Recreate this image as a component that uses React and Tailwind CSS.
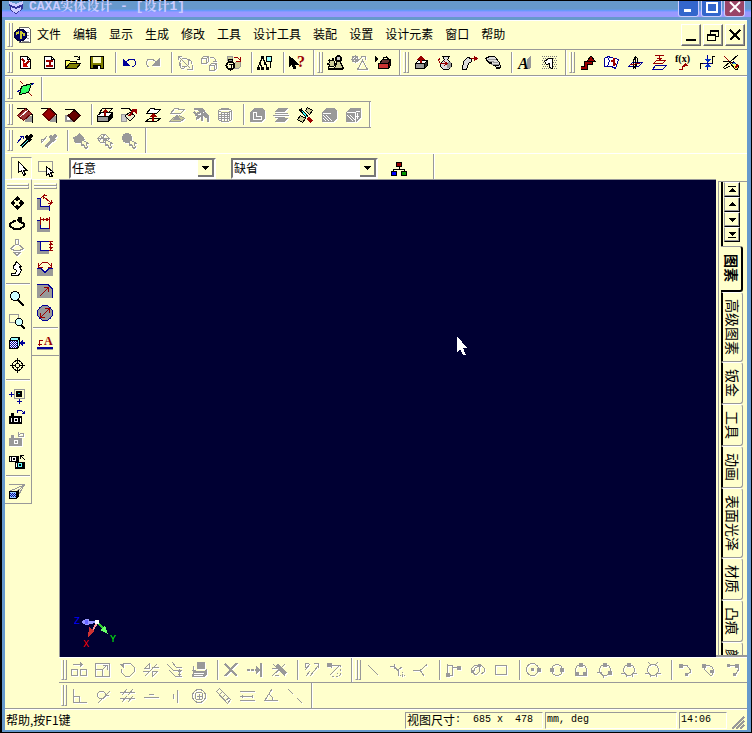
import { useState } from 'react';

const R = '#990000';
const B = '#000099';
const G = '#999999';
const W = '#ffffff';
const K = '#000000';
const N = 'none';
const box = (x, y, w, h) => `M${x} ${y}h${w}v${h}h${-w}z`;
const circle = (x, y, r) => `M${x - r} ${y}a${r} ${r} 0 1 0 ${2 * r} 0a${r} ${r} 0 1 0 ${-2 * r} 0z`;

// each shape: [path, stroke, fill, stroke width, dashes]; objects are labels
const ICONS = {
  // standard
  newScene: [['M4.5 2.5h7l3 3v9h-10z', K, W], ['M11.5 2.5v3h3'], ['M6 5l3 3M9 11l4-4', R, N, 2], ['M7 8v5h5z', N, '#cc0000']],
  newDrawing: [['M4.5 2.5h7l3 3v9h-10z', K, W], ['M11.5 2.5v3h3'], ['M6 7h7M6 12h7M9.5 7v5', R, N, 2]],
  open: [['M1.5 14.5v-8h4l1 1h6v2', K, '#ffff66'], ['M1.5 14.5l4-5h11l-4 5z', K, '#808000'], ['M9.5 3.5l1-1h3l2 2M15.5 2v3M13 5.5h3']],
  save: [[box(2.5, 2.5, 13, 12), K, '#808000'], [box(5, 3, 8, 6), N, '#ffffcc'], [box(5, 11, 8, 4), N, K], [box(10, 12, 2, 3), N, W]],
  undo: [['M3 5v6h6z', B, B], ['M6 8l3-2.5h5l1.5 2v3l-3 2.5', B]],
  redo: [['M15 5v6h-6z', G, G], ['M12 8l-3-2.5h-5l-1.5 2v3l2 2.5', G]],
  regen: [[circle(8.5, 8.5, 4.5), G], ['M2 2.5h4M2.5 2v4M3 3l11 11M16 11v4.5h-5M12 5l3 2v3M3 9l2 5h3', G]],
  boxes: [['M1.5 4.5l2-2h5v5l-2 2h-5zM1.5 4.5h5v5M6.5 4.5l2-2', G], ['M9.5 11.5l2-2h5v5l-2 2h-5zM9.5 11.5h5v5M14.5 11.5l2-2', G], ['M10 3h3l2 2v2M12.5 7.5h4', G]],
  lockBoxes: [['M3.5 2.5h5v4h-5zM10.5 9.5l2-2h4v5l-2 2h-4z', G, '#cccc99'], ['M10 3h3l3 3M16 3v4h-4', R], [circle(6.5, 11.5, 4), K, '#ffffcc', 2], ['M4.5 7V5h4v2', K], ['M5 10.5h4M7 10v4', K]],
  findTree: [['M6.5 4l-3 5l-1 5M6.5 4l3 5l2 5M4 9l2 5'], [box(5, 2, 3, 3), N, K], [box(3, 8, 2, 3), N, K], [box(8, 8, 2, 3), N, K], [box(1, 13, 3, 3), N, K], [box(5, 13, 3, 3), N, K], [box(10, 13, 3, 3), N, K], [circle(13, 5, 3), K, '#99ffff'], ['M14.5 8v6', K]],
  helpPointer: [['M1 2v11l3-3l2 5l2-1l-2-4h4z', K, K], { t: '?', x: 9, y: 13, c: R, s: 16 }],
  // palettes
  gearSet: [[circle(6, 9.5, 3), K, '#cccc99'], ['M1 9.5h2M9 9.5h3M6.5 4v2M3 6l1 1M2 13l2-1', K, N, 2], ['M8.5 14.5l3-8h2l4 8z', K, '#cccc99'], [circle(12.5, 4.5, 2.5), K, '#cccccc', 2], ['M2 15h15', K, N, 2]],
  gearSetOff: [[circle(5, 5, 2.5), G], ['M1 5.5h8M5.5 1v8M2 2l6 6M8 2l-6 6M7.5 15.5l5-9l5 9zM12 3l-4 4M11 2.5h4v3', G]],
  toolbox: [['M5.5 9.5l3-4h8l-2 4z', K, '#663333'], [box(4.5, 9.5, 10, 5), K, '#cc3333'], ['M14.5 9.5l2-4v6l-2 3z', K, '#660000'], ['M9.5 6V4l3-1l2 2', K], ['M1 2v6l4-3z', N, K]],
  extrude: [['M3.5 9.5l3-3h9l-3 3z', K, W], [box(3.5, 9.5, 9, 5), K, G], ['M12.5 9.5l3-3v5l-3 3z', K, '#333333'], ['M9 2v7', R, N, 2], ['M5 6l4-5l4 5z', N, R]],
  spin: [['M6.5 2.5h7l-2 3l4 4v3l-3 3h-5l-3-3v-3l4-4z', K, '#dddddd'], ['M12 8h2v5h-3', G, G], ['M3.5 4.5l-1 2l2 3h6M8 7l3 2.5l-3 2.5', R]],
  sweep: [['M2.5 15.5l1-8l4-4l4 1v3l-3 2l-2 6z', K, '#dddddd'], ['M11 4.5h5M14 2v5l3-2.5z', R, R]],
  loft: [['M1.5 4.5l4-2h5l5 6l1 5h-4l-2-3l-5-1z', K, '#dddddd'], ['M4 5l8 1M5 7l9 2M7 10l8 1', G], ['M4 8h4M9 11h6M12 14h4', K]],
  text3d: [['M11 5l4-3v11l-2 2h-2z', N, G], { t: 'A', x: 2, y: 15, c: K, s: 16, i: true }],
  sign: [['M1.5 2.5h15M2.5 4.5h14M1.5 6.5h15M2.5 8.5h14M1.5 10.5h15M2.5 12.5h14M1.5 14.5h15', '#777777', N, 1, '1 1'], ['M4.5 7.5l4-3h4v10l-3-1v-4l-3 1z', K, W]],
  // curves
  curve3d: [['M3 14h5v-5h5V5', K, N, 4], ['M3 14h5v-5h5V6', R, N, 2], ['M9 7l4-5l4 5z', K, R]],
  wrapCurve: [['M2.5 4.5l3-2l4 1l7 2l-3 9l-4-2h-7z', B, W], ['M5.5 3l2 4l-2 5', B], ['M11.5 4v8M9 6.5h2M12 9.5h2', R, N, 2]],
  crossCurve: [['M2.5 12.5l4-4h10l-4 4z', B], ['M9.5 2.5v12M9.5 2.5l-2 4v8l4-5v-5z', K], ['M4 11l10-2', R]],
  projCurve: [['M3.5 9.5l3-3h9l-3 3z', R], ['M2.5 15.5l3-4h11l-4 4z', B], ['M9.5 1v6M5 1.5h9M7 4.5h5M8.5 5.5h2', R]],
  fxCurve: [{ t: 'f(x)', x: 1, y: 8, c: K, s: 10 }, ['M5 15.5h3v-3h3', R], ['M8 12l3-3l3 3z', N, R]],
  bridge: [['M2.5 15v-6h3M12 9.5h2.500v-7h2', K], ['M9.5 1v15M5 9.5h9', B], ['M6 5h7l-3 3zM6 13h7l-3-3z', N, '#0033cc']],
  editCurve: [['M2 2l8 8', R], ['M16 1l-15 13M1 7.5h8M2 15l6-3', K], ['M8.5 9.5l3-2l5 5l-1 3h-2z', K, '#ffff66'], ['M13 14l3-3', R, N, 2], ['M10 10l2-2l2 2', B, '#33cccc']],
  // reference plane
  plane: [['M3.5 14.5l2-8l10-3l-3 9z', K, '#33ff66'], ['M4 1l3 3M13 13l3 3', R], ['M1 12l3-2M15 5l3-2', B]],
  // surface and face edit
  blend: [['M1 2.5h9l6 6v8', K], [box(9, 10, 7, 6), N, G], ['M1.5 9.5l8-7l6 5l-8 7z', '#660000', '#993333'], ['M4 11l8-7', W]],
  chamfer: [['M1 2.5h9l6 6v8', K], [box(10, 10, 6, 6), N, G], ['M9 2.5l6 6l-6 6l-6-6z', '#660000', R]],
  moveFace: [['M1 3.5h9l6 6', K], [box(1.5, 9.5, 7, 6), G, G], [box(3, 11, 3, 3), N, W], ['M10 4.5l6 5l-6 6l-6-6z', '#330000', '#660000']],
  pullFace: [['M1.5 9.5l4-3h11l-4 4h-11z', K, W], ['M1.5 10.5h11v5h-11z', K, G], ['M12.5 10.5l4-4v5l-4 4z', K, K], ['M3.5 6.5l3-4h10l-4 4z', K, '#ffffcc'], ['M9 4v6', R, N, 2], ['M6 6l3-3l3 3z', N, R]],
  draft: [['M1 2.5h8l4 4', K], [box(1.5, 8.5, 5, 7), G, '#cccccc'], ['M5 10l5-4l5 4l-5 5z', K, '#eeeecc'], ['M9 10l5-6', R, N, 2], ['M11 3h6v6z', N, R]],
  matchFace: [['M2.5 7.5l4-5h3l2 1h5l-4 4h-3z', K, W], ['M1.5 15.5l4-3h11l-4 3z', K], ['M9 15V9', R, N, 2], ['M5 11l4-4l4 4z', N, R]],
  offFace: [['M2.5 7.5l4-5h3l2 1h5l-4 4h-3z', G], ['M1.5 15.5l4-4h4l2-2l5 3l-4 3z', G, '#cccc99'], ['M9 9l-3 4h6z', G, G]],
  offKnit: [['M2 3h8l6 7v6', G, N, 2], ['M3 9l9-5M4 13l9-6M2 6l6 6M7 4l8 8M10 10v5', G, N, 2]],
  offShell: [['M2.5 4.5l3-2h7l3 2v9l-3 2h-7l-3-2zM2.5 4.5l3 2h7l3-2M4 3.5h10', G], ['M5.5 7v8M8.5 7v8M11.5 7v8M13.5 6v8', G], ['M3 8.5h12M3 10.5h12M3 12.5h12', G, N, 1, '2 1']],
  offHollow: [['M2 6l4-4h8l3 3v7l-4 4h-11z', N, G], ['M5.5 6.5h3v4h5v3h-8z', W]],
  offSection: [['M6 2h10l-3 4h-10zM6 12h10l-3 4h-10z', N, G], ['M1 9.5h16M3 7.5h13M3 11.5h10', G]],
  trimBody: [['M1.5 13.5l3-4l5 3l-3 4zM9.5 4.5l2-3l5 3l-3 4z', K, '#cccc99'], ['M4 3l7 8', K, N, 3], ['M6 5l5 6', '#33ffff'], ['M12 12l4 4', R, N, 3]],
  offBodyA: [['M2 6l4-4h8l3 3v7l-4 4h-11z', N, G], ['M3 7.5h8M3 9l6 6M3 12l3 3M6 9l6 6', W]],
  offBodyB: [['M2 6l4-4h11v9l-4 5h-11z', N, G], ['M3 6.5h8v9M3 9l6 6M6 9l5 5M12 5.5h4M12 10.5h3M13.5 7v6', W]],
  // render pickers
  dropper: [['M5 15l7-7', K, N, 3], ['M5 15l7-7', '#66ffff'], ['M10 4l5 5M12 7l4-4', K, N, 3], ['M1 11l6-7M4 4h3v3', B]],
  dropperOff: [['M6 15l6-7', G, N, 3], ['M10 4l5 5M12 7l4-4', G, N, 3], ['M1 7l4 0M1 7v4M2 10l5-6', G]],
  pickA: [['M1 5l4-1l2-3l4 3l2 4l-4 3h-6z', N, G], ['M9.5 7.5v6l2-1l2 4l2-1l-1-4h2z', G, '#ffffcc']],
  pickB: [['M1.5 6.5l4-4h4l4 4l-4 4h-5zM4 3l6 7M10 2l-7 7M7.5 2v8M2 6.5h11', G], ['M9.5 7.5v6l2-1l2 4l2-1l-1-4h2z', G, '#ffffcc']],
  pickC: [[circle(7, 6, 5), N, G], ['M9.5 7.5v6l2-1l2 4l2-1l-1-4h2z', G, '#ffffcc']],
  pointer: [['M5.5 2.5v11l3-2l2 5l2-1l-2-4h3.5z', K, W]],
  boxPointer: [[box(1.5, 2.5, 14, 10), G], ['M9.5 7.5v9l2-2l2 4l2-1l-2-4h3z', K, W]],
  tree: [['M9 6v4M3.5 12v-3h11v3', K], [box(6.5, 2.5, 5, 4), K, '#990000'], [box(1.5, 11.5, 5, 4), K, '#0000ff'], [box(11.5, 11.5, 5, 4), K, '#009900']],
  // view
  pan: [['M9 2l4 4h-8zM9 16l4-4h-8zM2 9l4-4v8zM16 9l-4-4v8z', N, K], ['M9 4v3M9 11v3M4 9h3M11 9h3', K, N, 2]],
  orbit: [['M12 5l4 3v2l-4 3h-6l-4-3v-2l4-3h2', K, N, 2], ['M10 1h4v7l-5-3z', N, K]],
  walkOff: [['M7.5 1.5h3v5h-3zM7.5 6.5l-5 4l4 2h5l4-2l-5-4M6 14.5h6l-3 3z', G]],
  walk: [['M8.5 1.5l5 5h-2l2 4l-3 5h-7v-2h4l1-3l-3-2v-3h1z', K, W]],
  zoom: [[circle(7, 6, 4.5), K, '#ccffff'], ['M10 10l6 6', K, N, 2]],
  zoomBox: [[box(1.5, 2.5, 9, 8), G], [circle(11, 10, 3.5), K, '#ccffff'], ['M13 13l4 4', K, N, 2]],
  lookAt: [['M1.5 6.5l2-3h8l-2 3zM9.5 6.5l2-3v8l-2 3', K, '#99ffff'], [box(1.5, 6.5, 8, 8), K, W], ['M2 7.5h7M3 8.5h7M2 9.5h7M3 10.5h7M2 11.5h7M3 12.5h7M2 13.5h7', B, N, 1, '1 1'], ['M13 9h4', B, N, 2], ['M15 6v6l-4-3z', N, B]],
  target: [[circle(9.5, 9.5, 5), K], [circle(9.5, 9.5, 2), K], ['M9.5 2v5M9.5 12v5M2 9.5h5M12 9.5h5']],
  viewBox: [[box(6.5, 3.5, 10, 9), G], [box(8, 5, 6, 6), N, K], ['M10 7h2', '#33cccc'], ['M1 8.5h5M3.5 6v5M11.5 13v5M9 15.5h5', B]],
  camera: [['M1 8h13v8h-13zM3 5h3v4h-3z', N, K], [circle(8, 12, 2), W], [box(3, 10, 1, 4), N, W], [box(12, 10, 1, 4), N, W], ['M9.5 5V2.5h4l2 2', B], ['M13 6h4V2z', N, B]],
  cameraOff: [['M1 8h13v8h-13zM3 5h3v4h-3z', N, G], [circle(8, 12, 2), W], ['M10.5 2v4h4M15.5 7v-4h-3l-2 3', G]],
  cameras: [['M1 4h10v6h-10z', N, K], [circle(6, 7, 2), W], [box(2, 5, 1, 4), N, W], ['M7 10h10v7h-10z', N, K], [circle(12, 13, 2), '#66ffff'], [box(8, 11, 1, 4), N, W], ['M12 3.5h4M12.5 3v4M13 4l4 4', K]],
  persp: [['M1 2.5h16M16 3l-7 13M16 3l-14 6M17 3l-9 7', G], [box(1, 9, 8, 8), N, K], [box(2, 10, 6, 6), N, '#99ccff'], ['M2 11.5h6M3 12.5h5M2 13.5h6M3 14.5h5', B, N, 1, '1 1'], ['M9 9l2-1v6l-2 3z', N, K]],
  // smart dimensions
  dimAlign: [['M1 5h4v8h9v3h-13z', N, G], ['M1 4.5h3.5v8h9v4', B], ['M7 2l8 7M5 4l4-4M13 12l4-4M7 5V1.5h4M15 6v3.5h-3', R]],
  dimHoriz: [['M1 5h4v7h9v4h-13z', N, G], ['M1 4.5h3.5v8h8.5v-10', B], ['M4.5 1v8M13.5 1v12M5 3.5h8', R], ['M5 3.5l3-2v4zM13 3.5l-3-2v4z', N, R]],
  dimVert: [['M1 4h4v8h8v4h-12z', N, G], ['M1 3.5h12M4.5 4v8h9', B], ['M13 3.5h4M13 12.5h4M14.5 4v8', R], ['M15 4l-2 3h4zM15 12l-2-3h4z', N, R]],
  dimAngle: [['M1 9h4l4 4l4-4h4v7h-16z', N, G], ['M1 8.5h4l4 4l4-4h4', B], ['M3 6l4-4h4l4 4M2.5 3v4h4M15.5 3v4h-4', R]],
  dimRadius: [['M1 3h11l4 5v8h-15z', N, G], ['M1 2.5h11l4 4v9', B], ['M4 14l8-8M8 5.5h4.5V10', R]],
  dimDiameter: [[circle(9, 9, 7.5), B, G], ['M5 13l8-8M9 4.5h4.5V9M4.5 9v4.5H9', R]],
  textNote: [['M1 14h16', B, N, 2], ['M1 15.5h16', G], ['M3 6.5h4M3.5 6v6M2 10.5h4', R], { t: 'A', x: 8, y: 11, c: R, s: 12 }],
  // sketch
  mirrorCopy: [['M3 3.5h8', G], ['M10 1v5l3-2.5z', N, G], [box(1.5, 8.5, 6, 6), G], [box(10.5, 8.5, 6, 6), G]],
  scale: [[box(1.5, 2.5, 14, 13), G], [box(1.5, 8.5, 7, 7), G], ['M8 9l5-5M9 4.5h4.5V9', G]],
  rotate: [['M4 4l3-2h5l4 4v5l-4 4h-5l-4-4v-3', G], ['M1 3h5v5z', N, G]],
  mirror: [['M3 15L15 3M2.5 7.5h5v-5zM10.5 10.5v5l5-5zM1 10.5h7M10 6.5h7', G]],
  offset: [['M1 3l6 6h9M6 1l4 5h6M3 9l6 6h7M13.5 8v7M12 10.5h3M12 13.5h3', G]],
  project: [['M7 1h8v7h-8zM3 10h11l3-2v5l-3 3h-12z', N, G], ['M3.5 5v6M2 9.5h4', G], ['M4 12.5h10M4 14.5h9', W]],
  trim: [['M3 3l12 12M15 2l-12 13', G, N, 2]],
  extend: [['M1 9h11', G, N, 2, '3 1'], ['M10 5v8l4-4z', N, G], ['M15 2v14', G, N, 2]],
  breakAt: [['M2 15L15 3M3 3l12 12', G], ['M7 4l9 9', G, N, 3], ['M2 7.5h5M5 14.5h4', G]],
  lineDims: [['M3 9l5-6M8 15l8-10M4 15l4-5M3 6.5v-4h4M12 2.5h4v4', G]],
  cornerDims: [[box(1, 2, 5, 4), N, G], ['M5 4.5h10M4 14l10-10', G], ['M14.5 4v11M6 15.5h8M5 6l9 9', G, N, 1, '2 2']],
  line: [['M4 4l10 10', G]],
  tanLine: [['M2 5.5h4l4 4l1 5M6.5 3v5M10 9l4-3', G], ['M12 14.5h5M14.5 11v5', G, N, 1, '1 1']],
  perpLine: [['M1 9.5h7l7-6M8 9l4 6', G]],
  polyline: [['M3.5 3v10M4 4.5h4M8.5 4v10h-5M8.5 6.5h7', G], [box(2, 12, 4, 4), N, G], [box(13, 5, 4, 4), N, G]],
  spline: [['M4 12l-1-4l4-4l4 1v6l-3 3l-3-2l2-5l6-3l3 3v4l-3 2', G], [box(3, 9, 3, 3), N, G], [box(10, 3, 3, 3), N, G]],
  rect: [[box(3.5, 4.5, 11, 9), G]],
  circC: [[circle(8.5, 8.5, 6), G], [box(7, 7, 3, 3), N, G], [box(13, 7, 4, 4), N, G]],
  circ2: [[circle(9, 9, 5.5), G], [box(2, 7, 4, 4), N, G], [box(12, 7, 4, 4), N, G]],
  circ3: [[circle(9, 9, 5.5), G], [box(7, 2, 4, 4), N, G], [box(3, 11, 4, 4), N, G], [box(11, 11, 4, 4), N, G]],
  circT1: [[circle(9, 9, 5.5), G], [box(7, 2, 4, 4), N, G], [box(12, 10, 4, 4), N, G], ['M1 11.5h4l3 5', G]],
  circT2: [[circle(9, 9, 5.5), G], [box(7, 2, 4, 4), N, G], ['M1 12.5h5M12 12.5h5M6.5 13v3M12.5 13v3', G]],
  circT3: [[circle(9, 9, 5.5), G], ['M4 1l2 2h6l2-2M1 12.5h5M12 12.5h5M6.5 13v3M12.5 13v3', G]],
  arcA: [['M5 4.5h6l3 4v3l-4 3', G], [box(3, 3, 4, 4), N, G], [box(9, 12, 3, 3), N, G]],
  arcB: [['M4 4v4l6 6h2l2-4l-2-4l-4-2z', G], [box(2, 3, 4, 4), N, G], [box(10, 9, 4, 3), N, G]],
  arcC: [['M4 4.5h10v5l-3 5', G], [box(3, 3, 3, 3), N, G], [box(11, 3, 4, 4), N, G], [box(9, 12, 3, 3), N, G]],
  // constraints
  perp: [['M3.5 2v13h13M3.5 9.5h6v5', G]],
  tangent: [[circle(7.5, 8, 4), G], ['M4 16L16 4M11 8.5h4', G]],
  parallel: [['M2 5.5h15M2 11.5h15M4 8l5-6M10 8l5-6M4 15l5-6M10 15l5-6', G]],
  horiz: [['M2 10.5h15M7 7.5h5', G]],
  vert: [['M11.5 3v13M7.5 7v5', G]],
  concentric: [[circle(9, 9, 6.5), G], [circle(9, 9, 4), G], ['M7 9.5h5M9.5 7v5', G]],
  equal: [['M2.5 4.5l3-3l11 11l-3 4zM5 8l3-3M8 11l4-4M11 14l4-3', G]],
  equalLen: [['M2 4.5h15M2 9.5h13M2 13.5h15M4.5 8v3M14.5 8v3', G]],
  angle: [['M2 13.5h14M3 13l7-11M7 7l3 3v4', G]],
  collinear: [['M2 2l5 5M11 11l5 5', G]],
};

const STANDARD = ['newScene 新建', 'newDrawing 新建图纸', 'open 打开', 'save 保存', '|', 'undo 撤消', '-redo 重做', '|', '-regen 更新', '-boxes 移动', 'lockBoxes 锁定', '|', 'findTree 查找', '|', 'helpPointer 帮助', '||', 'gearSet 设计库', '-gearSetOff 零件库', 'toolbox 工具箱', '||', 'extrude 拉伸', 'spin 旋转', 'sweep 扫描', 'loft 放样', '|', 'text3d 文字', 'sign 标志', '||', 'curve3d 三维曲线', 'wrapCurve 包裹曲线', 'crossCurve 交线', 'projCurve 投影线', 'fxCurve 公式曲线', 'bridge 桥接曲线', 'editCurve 编辑曲线'];
const FACES = ['blend 圆角', 'chamfer 倒角', 'moveFace 移动面', '|', 'pullFace 拉伸面', 'draft 拔模', 'matchFace 匹配面', '-offFace 等距面', '-offKnit 缝合', '-offShell 抽壳', '|', '-offHollow 挖空', '-offSection 截面', 'trimBody 裁剪', '-offBodyA 布尔', '-offBodyB 分割'];
const RENDER = ['dropper 提取', '-dropperOff 应用', '|', '-pickA 表面', '-pickB 线框', '-pickC 零件'];
const VIEW = ['pan 平移', 'orbit 旋转视图', '-walkOff 前后', 'walk 漫游', '|', 'zoom 缩放', 'zoomBox 窗口缩放', 'lookAt 指定面', 'target 目标', '|', 'viewBox 全屏', 'camera 保存视向', '-cameraOff 恢复视向', 'cameras 视向', '|', 'persp 透视'];
const DIMS = ['dimAlign 对齐尺寸', 'dimHoriz 水平尺寸', 'dimVert 垂直尺寸', 'dimAngle 角度尺寸', 'dimRadius 半径', 'dimDiameter 直径', '|', 'textNote 文字注释'];
const SKETCH = ['-mirrorCopy 平移', '-scale 缩放', '-rotate 旋转', '-mirror 镜像', '-offset 等距', '-project 投影', '|', '-trim 裁剪', '-extend 延伸', '-breakAt 打断', '|', '-lineDims 曲线尺寸', '-cornerDims 端点', '||', '-line 两点线', '-tanLine 切线', '-perpLine 法线', '|', '-polyline 连续线', '-spline 样条', '-rect 长方形', '|', '-circC 圆心圆', '-circ2 两点圆', '-circ3 三点圆', '-circT1 一切点圆', '-circT2 两切点圆', '-circT3 三切点圆', '|', '-arcA 圆弧', '-arcB 圆心弧', '-arcC 三点弧'];
const CONSTRAINTS = ['-perp 垂直', '-tangent 相切', '-parallel 平行', '-horiz 水平', '-vert 竖直', '-concentric 同心', '-equal 等长', '-equalLen 等距', '-angle 角度', '-collinear 共线'];
const MENUS = ['文件', '编辑', '显示', '生成', '修改', '工具', '设计工具', '装配', '设置', '设计元素', '窗口', '帮助'];
const TABS = ['图素', '高级图素', '钣金', '工具', '动画', '表面光泽', '材质', '凸痕', '颜色'];

function Icon({ name, off }) {
  return (
    <svg width="18" height="18" viewBox="0 0 18 18" shapeRendering="crispEdges" aria-hidden="true" className={off ? 'shrink-0 drop-shadow-[1px_1px_0_#fff]' : 'shrink-0'}>
      {ICONS[name].map((s, i) =>
        Array.isArray(s) ? (
          <path key={i} d={s[0]} stroke={s[1] || K} fill={s[2] || N} strokeWidth={s[3] || 1} strokeDasharray={s[4]} />
        ) : (
          <text key={i} x={s.x} y={s.y} fill={s.c} fontSize={s.s} fontWeight="bold" fontStyle={s.i ? 'italic' : 'normal'} fontFamily="Liberation Serif, serif">{s.t}</text>
        )
      )}
    </svg>
  );
}

function Grip({ vertical }) {
  if (vertical) {
    return (
      <div className="flex h-3 w-full flex-col px-0.5 pt-[3px]">
        <span className="h-[3px] border-t border-r border-b border-t-white border-r-[#999] border-b-[#999]" />
        <span className="h-[3px] border-t border-r border-b border-t-white border-r-[#999] border-b-[#999]" />
      </div>
    );
  }
  return (
    <div className="flex h-full w-2 shrink-0 py-0.5 pl-0.5">
      <span className="w-[3px] border-r border-b border-l border-r-[#999] border-b-[#999] border-l-white" />
      <span className="w-[3px] border-r border-b border-l border-r-[#999] border-b-[#999] border-l-white" />
    </div>
  );
}

function Tools({ items, vertical }) {
  return items.map((item, i) => {
    if (item === '|') {
      return vertical ? (
        <div key={i} className="flex h-2 w-full items-center px-px">
          <span className="h-0.5 w-full border-t border-b border-t-[#999] border-b-white" />
        </div>
      ) : (
        <div key={i} className="flex h-full w-2 shrink-0 justify-end py-0.5">
          <span className="w-0.5 border-r border-l border-r-white border-l-[#999]" />
        </div>
      );
    }
    if (item === '||') {
      return (
        <div key={i} className="flex h-full w-3.5 shrink-0 pl-1">
          <span className="w-0.5 shrink-0 border-r border-l border-r-white border-l-[#999]" />
          <Grip />
        </div>
      );
    }
    const off = item[0] === '-';
    const [name, label] = item.replace('-', '').split(' ');
    return (
      <button key={i} type="button" aria-label={label} disabled={off} className={vertical ? 'flex h-[22px] w-full items-center justify-center pr-0.5' : 'flex h-full w-6 shrink-0 items-center justify-center'}>
        <Icon name={name} off={off} />
      </button>
    );
  });
}

function Combo({ label, options }) {
  return (
    <div className="relative flex h-[21px] w-[147px] shrink-0 border-2 border-t-[#777] border-r-white border-b-white border-l-[#777]">
      <select aria-label={label} className="w-full appearance-none bg-white pb-0.5 pl-px leading-none">
        {options.map((o) => <option key={o}>{o}</option>)}
      </select>
      <span className="pointer-events-none absolute inset-y-0 right-0 flex w-4 items-center justify-center border-r-2 border-b-2 border-r-[#777] border-b-[#777] bg-[#ffffcc]">
        <svg width="7" height="4" shapeRendering="crispEdges"><path d="M0 0h7L3.5 4z" /></svg>
      </span>
    </div>
  );
}

function TitleBar() {
  const btn = 'flex h-4 w-[21px] items-end justify-center rounded-b-[3px] border border-t-0 border-[#ccccff]';
  return (
    <header className="flex h-5 shrink-0 flex-col border-t border-black bg-[#6699cc]">
      <div className="flex h-4 items-start justify-between bg-linear-to-b from-[#6699cc] from-50% via-[#6699ff] via-60% to-[#9999ff] to-70% pr-1.5 pl-1.5">
        <div className="flex items-start gap-1">
          <svg width="17" height="13" viewBox="0 0 17 13" shapeRendering="crispEdges" aria-hidden="true">
            <path d="M1 1l7 4l7-4v7l-7 5l-6-4z" fill="#333399" />
            <path d="M1 0l7 3l7-3v3l-7 3l-7-3zM3 6l5 2l5-2v3l-5 3l-5-3z" fill="#ccccff" />
          </svg>
          <h1 className="font-['Liberation_Mono','Noto_Serif_CJK_SC','Noto_Sans_CJK_SC',monospace] text-[13px] leading-3 font-bold whitespace-pre text-[#ccccff]">CAXA实体设计 - [设计1]</h1>
        </div>
        <div className="flex gap-0.5">
          <button type="button" aria-label="最小化" className={`${btn} bg-[#3366cc]`}>
            <svg width="18" height="15"><path d="M4 8h7v3H4z" fill="#fff" /></svg>
          </button>
          <button type="button" aria-label="还原" className={`${btn} bg-[#3366cc]`}>
            <svg width="18" height="15"><path d="M4 2h10v9H4z" fill="none" stroke="#fff" strokeWidth="2" /></svg>
          </button>
          <button type="button" aria-label="关闭" className={`${btn} bg-[#994466]`}>
            <svg width="18" height="15"><path d="M4 1l10 10M14 1L4 11" stroke="#fff" strokeWidth="2" /></svg>
          </button>
        </div>
      </div>
    </header>
  );
}

function MenuBar() {
  const btn = 'flex h-[22px] w-5 items-center justify-center border border-t-white border-r-[#666] border-b-[#666] border-l-white shadow-[inset_-1px_-1px_0_#999]';
  return (
    <div className="flex h-[29px] shrink-0 items-center border-b border-[#999]">
      <Grip />
      <svg width="20" height="18" viewBox="0 0 20 18" shapeRendering="crispEdges" aria-hidden="true">
        <path d="M6.5 1.5h9l2 2v13h-11z" fill="#fff" stroke="#666" />
        <path d="M14 6.5h2M14 9.5h2M14 12.5h2M9 15.5h7" stroke="#999" />
        <circle cx="7.5" cy="9" r="6" fill="#000066" stroke="#003" />
        <path d="M3 8l3-2M7.5 5v8M7 6l4 2v2" stroke="#cccc33" strokeWidth="2" fill="none" />
      </svg>
      <nav className="ml-1 flex flex-1 gap-3 pb-0.5">
        {MENUS.map((m) => <button key={m} type="button" className="whitespace-nowrap">{m}</button>)}
      </nav>
      <div className="flex gap-0.5 pr-0.5">
        <button type="button" aria-label="最小化文档" className={btn}>
          <svg width="14" height="14" shapeRendering="crispEdges"><path d="M2 11h10v2H2z" /></svg>
        </button>
        <button type="button" aria-label="还原文档" className={btn}>
          <svg width="14" height="14" shapeRendering="crispEdges" fill="none" stroke="#000"><path d="M4.5 6V2.5h8v6H9M4 3.5h9M1.5 6.5h8v6h-8zM1 7.5h9" /></svg>
        </button>
        <button type="button" aria-label="关闭文档" className={btn}>
          <svg width="14" height="14" shapeRendering="crispEdges"><path d="M2 2l10 10M12 2L2 12" stroke="#000" strokeWidth="2" /></svg>
        </button>
      </div>
    </div>
  );
}

function Viewport() {
  return (
    <main className="relative min-w-0 flex-1 border-t border-l border-[#999] bg-[#000033]">
      <svg width="12" height="20" viewBox="0 0 12 20" shapeRendering="crispEdges" className="absolute top-[156px] left-[396px]">
        <path d="M1 0v16l3-3l3 6h3l-3-7h4z" fill="#fff" />
      </svg>
      <svg width="46" height="38" viewBox="0 0 46 38" className="absolute bottom-2 left-3.5" shapeRendering="crispEdges" fontFamily="Liberation Mono, monospace" fontSize="10">
        <path d="M22 11h-12" stroke="#9999ff" strokeWidth="2" />
        <path d="M7 11l5-3h3v2h4v3h-4v1h-3z" fill="#9999ff" />
        <path d="M11 9h3v4h-3z" fill="#6666ff" />
        <path d="M23 12l-6 10" stroke="#ff9999" strokeWidth="2" />
        <path d="M14 26l1-10l6 4z" fill="#cc3333" />
        <path d="M23 11l6 6" stroke="#33cc33" strokeWidth="2" />
        <path d="M34 23l-3-8l-5 4z" fill="#66ff66" />
        <path d="M21 9h4v4h-4z" fill="#fff" />
        <g strokeWidth="0">
          <text x="0" y="13" fill="#0000ff">Z</text>
          <text x="9" y="36" fill="#ff0000">X</text>
          <text x="36" y="31" fill="#00ff00">Y</text>
        </g>
      </svg>
    </main>
  );
}

function Catalog() {
  const [active, setActive] = useState('图素');
  const arrows = ['M1 1h8v1H1zM5 3l4 4H1z', 'M5 2l4 4H1z', 'M1 3h8L5 7z', 'M1 2h8L5 6zM1 7h8v1H1z'];
  return (
    <aside className="flex w-[31px] shrink-0 flex-col overflow-hidden border-b-2 border-[#999] pt-0.5 pl-0.5">
      <div className="flex min-h-0 flex-1 flex-col border-t border-l border-[#999] pl-0.5">
        <div className="flex shrink-0 flex-col border-l-2 border-black pb-1 pl-px">
          {arrows.map((d, i) => (
            <button key={i} type="button" aria-label={['首页', '上移', '下移', '末页'][i]} className="flex h-[15px] w-4 items-center justify-center border border-t-white border-r-black border-b-black border-l-[#999] shadow-[inset_-1px_-1px_0_#999]">
              <svg width="10" height="9" shapeRendering="crispEdges"><path d={d} /></svg>
            </button>
          ))}
        </div>
        {TABS.map((t) => (
          <button
            key={t}
            type="button"
            onClick={() => setActive(t)}
            className={
              t === active
                ? 'flex w-[22px] shrink-0 items-center justify-center rounded-r-[3px] border-t border-r-2 border-b-2 border-t-[#999] border-r-black border-b-black pt-[7px] pb-2 pl-px font-bold'
                : 'flex w-[22px] shrink-0 items-center justify-center rounded-r-[3px] border-t border-r border-b border-l-2 border-t-white border-r-[#999] border-b-[#999] border-l-black py-1.5'
            }
          >
            <span className="text-sm leading-4 whitespace-nowrap [text-orientation:sideways] [writing-mode:vertical-rl]">{t}</span>
          </button>
        ))}
      </div>
    </aside>
  );
}

function StatusBar() {
  const cell = "flex h-[17px] items-center border border-t-[#999] border-r-white border-b-white border-l-[#999] pl-px whitespace-pre font-['Liberation_Mono','Noto_Sans_CJK_SC',monospace] text-[10px]";
  return (
    <footer className="flex h-[21px] shrink-0 items-center gap-0.5 border-t border-white">
      <span className="flex-1 pl-px">帮助,按F1键</span>
      <span className={`${cell} w-[138px]`}><span className="font-['Noto_Sans_CJK_SC',sans-serif] text-xs">视图尺寸</span>:  685 x  478</span>
      <span className={`${cell} w-[132px]`}>mm, deg</span>
      <span className={`${cell} w-12`}>14:06</span>
      <svg width="16" height="16" shapeRendering="crispEdges" aria-hidden="true" className="mr-0.5 self-end">
        <path d="M3 15L15 3M7 15l8-8M11 15l4-4" stroke="#999" strokeWidth="2" />
      </svg>
    </footer>
  );
}

const rowEnd = 'ml-1 w-0.5 self-stretch border-r border-l border-r-white border-l-[#999]';

export default function App() {
  return (
    <div className="flex h-screen flex-col overflow-hidden border-r border-b border-l-2 border-black bg-[#6699cc] font-['Noto_Sans_CJK_SC',sans-serif] text-xs text-black">
      <TitleBar />
      <div className="mx-[3px] mr-1 mb-0.5 flex min-h-0 flex-1 flex-col border-t border-white bg-[#ffffcc]">
        <MenuBar />
        <div role="toolbar" aria-label="标准" className="flex h-[26px] shrink-0 items-center overflow-hidden border-b border-[#999]">
          <Grip />
          <Tools items={STANDARD} />
        </div>
        <div role="toolbar" aria-label="基准面" className="flex h-[25px] shrink-0 items-center border-t border-white">
          <Grip />
          <Tools items={['plane 基准面']} />
          <span className={rowEnd} />
        </div>
        <div role="toolbar" aria-label="面编辑" className="flex h-[27px] shrink-0 items-center self-start border-t border-b border-[#999]">
          <Grip />
          <Tools items={FACES} />
          <span className={rowEnd} />
        </div>
        <div role="toolbar" aria-label="渲染" className="flex h-[26px] shrink-0 items-center border-b border-white">
          <Grip />
          <Tools items={RENDER} />
          <span className={rowEnd} />
        </div>
        <div role="toolbar" aria-label="选择" className="flex h-[25px] shrink-0 items-end pl-1.5">
          <button type="button" aria-label="选择" className="flex h-[22px] w-[21px] items-center justify-center border border-t-[#999] border-r-white border-b-white border-l-[#999]">
            <Icon name="pointer" />
          </button>
          <button type="button" aria-label="框选" className="ml-0.5 flex h-[22px] w-6 items-center justify-center">
            <Icon name="boxPointer" />
          </button>
          <div className="ml-[11px] flex items-center">
            <Combo label="选择过滤" options={['任意', '零件', '面']} />
            <div className="w-[15px]" />
            <Combo label="配置" options={['缺省']} />
            <button type="button" aria-label="设计树" className="ml-[9px] flex w-6 justify-center">
              <Icon name="tree" />
            </button>
          </div>
          <span className="ml-[22px] w-0.5 self-stretch border-r border-l border-r-white border-l-[#999]" />
        </div>
        <div className="flex min-h-0 flex-1">
          <div role="toolbar" aria-label="视向" aria-orientation="vertical" className="flex w-[27px] shrink-0 flex-col self-start border-t border-r border-b border-t-white border-r-[#999] border-b-[#999] pb-px">
            <Grip vertical />
            <Tools items={VIEW} vertical />
          </div>
          <div role="toolbar" aria-label="智能标注" aria-orientation="vertical" className="flex w-[27px] shrink-0 flex-col self-start border-t border-b border-t-white border-b-[#999] pb-px">
            <Grip vertical />
            <Tools items={DIMS} vertical />
          </div>
          <Viewport />
          <Catalog />
        </div>
        <div className="flex shrink-0 flex-col pl-[54px]">
          <div role="toolbar" aria-label="草图" className="flex h-[26px] items-center overflow-hidden border-t border-b border-t-white border-b-[#999]">
            <Grip />
            <Tools items={SKETCH} />
          </div>
          <div role="toolbar" aria-label="约束" className="flex h-[25px] items-center">
            <Grip />
            <Tools items={CONSTRAINTS} />
            <span className={rowEnd} />
          </div>
        </div>
        <div className="h-px shrink-0 bg-[#999]" />
        <StatusBar />
      </div>
    </div>
  );
}
